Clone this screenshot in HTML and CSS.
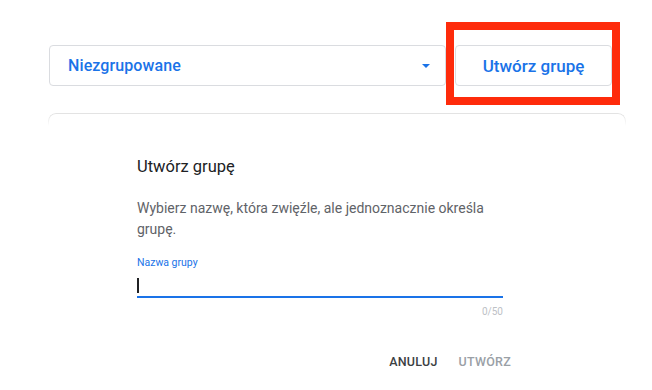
FILE: index.html
```html
<!DOCTYPE html>
<html>
<head>
<meta charset="utf-8">
<title>Utwórz grupę</title>
<link rel="stylesheet" href="styles.css">
</head>
<body>
<div id="app">

	<div class="toolbar">
		<div class="select">
			<span class="select-text">Niezgrupowane</span>
			<span class="select-arrow"></span>
		</div>
		<div class="btn-wrap">
			<button class="btn-create">Utwórz grupę</button>
			<div class="highlight"></div>
		</div>
	</div>

	<div class="card"></div>

	<div class="dialog">
		<h2 class="dialog-title">Utwórz grupę</h2>
		<p class="dialog-text">Wybierz nazwę, która zwięźle, ale jednoznacznie określa grupę.</p>
		<div class="field">
			<label class="field-label">Nazwa grupy</label>
			<div class="field-input"><span class="caret"></span></div>
			<div class="field-count">0/50</div>
		</div>
		<div class="dialog-actions">
			<button class="btn-text">Anuluj</button>
			<button class="btn-text disabled">Utwórz</button>
		</div>
	</div>

</div>
</body>
</html>
```

FILE: styles.css
```css
body {
	margin: 0;
	background: #fff;
	font-family: Roboto, "Noto Sans", Arial, sans-serif;
	color: #202124;
}
#app {
	width: 652px;
	height: 390px;
	overflow: hidden;
}
.toolbar {
	display: flex;
	gap: 9px;
	padding: 45px 0 0 49px;
}
.select {
	display: flex;
	align-items: center;
	justify-content: space-between;
	box-sizing: border-box;
	width: 397px;
	height: 41px;
	padding: 0 15px 0 18px;
	border: 1px solid #dadce0;
	border-radius: 4px;
}
.select-text {
	font-size: 16px;
	font-weight: 500;
	letter-spacing: .1px;
	color: #1a73e8;
}
.select-arrow {
	width: 0;
	height: 0;
	border-left: 4px solid transparent;
	border-right: 4px solid transparent;
	border-top: 4px solid #1a73e8;
}
.btn-wrap {
	position: relative;
}
.btn-create {
	box-sizing: border-box;
	width: 157px;
	height: 41px;
	border: 1px solid #dadce0;
	border-radius: 4px;
	background: #fff;
	font-family: inherit;
	font-size: 17px;
	font-weight: 500;
	color: #1a73e8;
}
.highlight {
	position: absolute;
	top: -23px;
	left: -9px;
	right: -8px;
	bottom: -19px;
	border: 8px solid #fe2b0b;
}
.card {
	box-sizing: border-box;
	width: 578px;
	height: 16px;
	margin: 27px 0 0 48px;
	border: 1px solid #e3e3e3;
	border-bottom: none;
	border-radius: 8px 8px 0 0;
	-webkit-mask-image: linear-gradient(to bottom, #000 10%, transparent 80%);
	mask-image: linear-gradient(to bottom, #000 10%, transparent 80%);
}
.dialog {
	box-sizing: border-box;
	width: 414px;
	margin-left: 113px;
	padding: 26px 24px 0;
}
.dialog-title {
	margin: 0;
	font-size: 16.5px;
	font-weight: 400;
	line-height: 24px;
	color: #202124;
}
.dialog-text {
	margin: 19px 0 0;
	font-size: 14px;
	line-height: 21px;
	color: #5f6368;
}
.field {
	margin-top: 16px;
}
.field-label {
	display: block;
	font-size: 10.5px;
	line-height: 14px;
	color: #1a73e8;
}
.field-input {
	height: 22px;
	margin-top: 4px;
	border-bottom: 2px solid #1a73e8;
	display: flex;
	align-items: flex-end;
}
.caret {
	width: 1.5px;
	height: 15px;
	margin-bottom: 3px;
	background: #202124;
}
.field-count {
	margin-top: 8px;
	text-align: right;
	font-size: 10px;
	line-height: 12px;
	color: #bdc1c6;
}
.dialog-actions {
	display: flex;
	justify-content: flex-end;
	gap: 5px;
	margin: 28px -16px 0 0;
}
.btn-text {
	border: none;
	background: none;
	padding: 8px;
	font-family: inherit;
	font-size: 12.5px;
	font-weight: 500;
	letter-spacing: .25px;
	text-transform: uppercase;
	color: #3c4043;
}
.btn-text.disabled {
	color: #9aa0a6;
}
```
